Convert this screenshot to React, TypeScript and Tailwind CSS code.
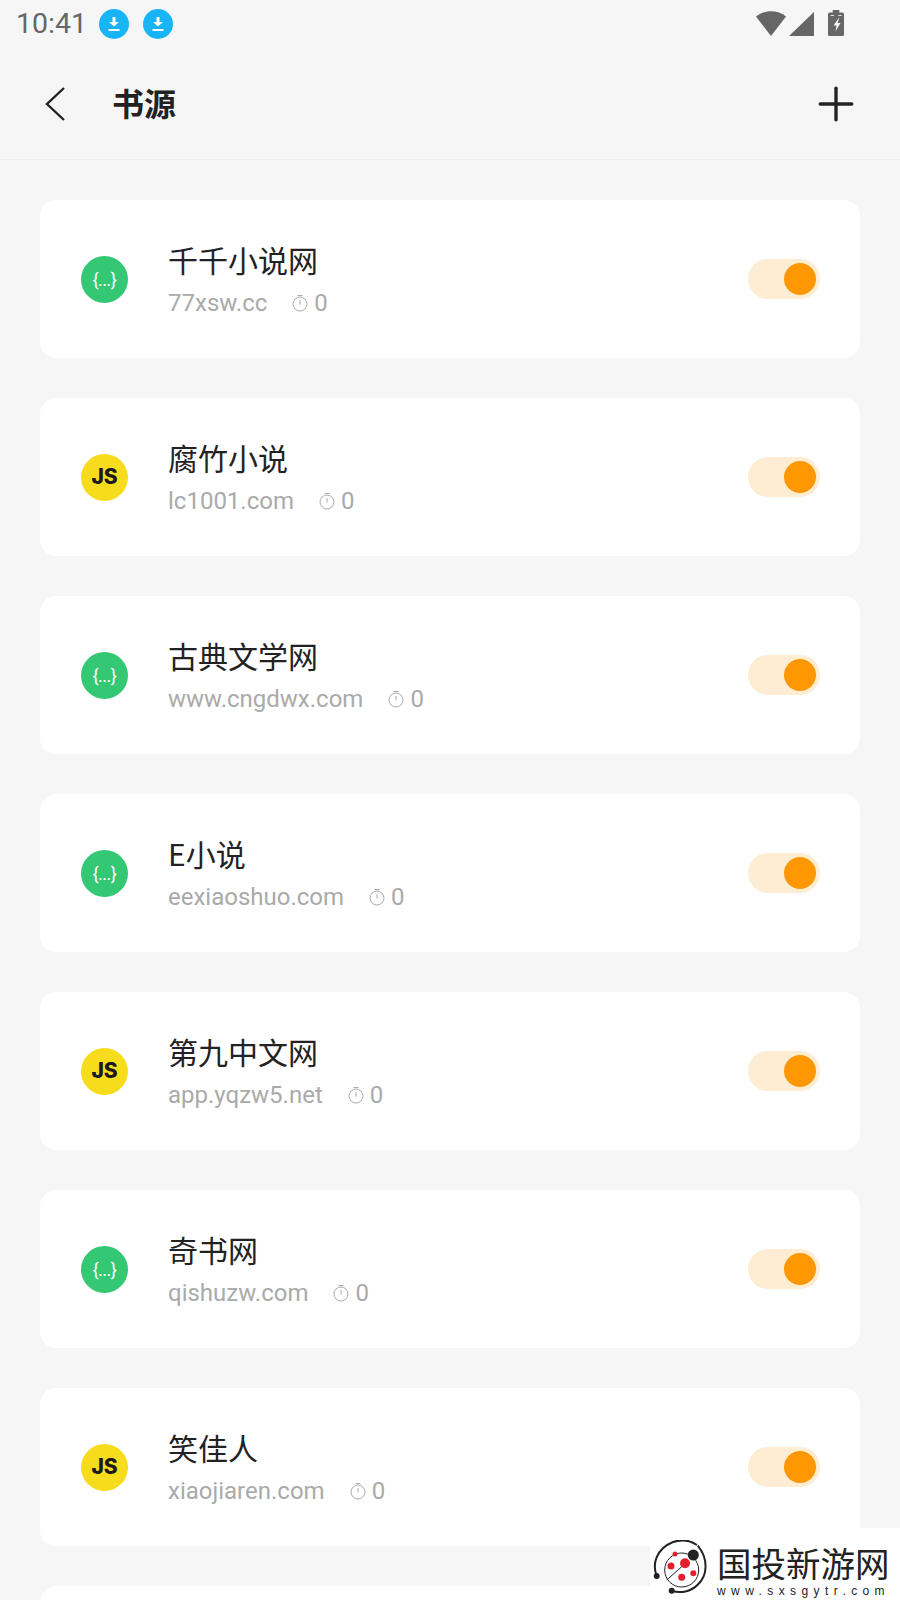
import { Plus } from 'lucide-react'

type Source = { name: string; host: string; kind: 'json' | 'js' }

const sources: Source[] = [
  { name: '千千小说网', host: '77xsw.cc', kind: 'json' },
  { name: '腐竹小说', host: 'lc1001.com', kind: 'js' },
  { name: '古典文学网', host: 'www.cngdwx.com', kind: 'json' },
  { name: 'E小说', host: 'eexiaoshuo.com', kind: 'json' },
  { name: '第九中文网', host: 'app.yqzw5.net', kind: 'js' },
  { name: '奇书网', host: 'qishuzw.com', kind: 'json' },
  { name: '笑佳人', host: 'xiaojiaren.com', kind: 'js' },
]

const DownloadBadge = () => (
  <div className="w-[30px] h-[30px] rounded-full bg-[#17b5f5] flex items-center justify-center">
    <svg width="14" height="16" viewBox="0 0 14 16" fill="#fff">
      <path d="M5.500 1h3v5H12L7 10.500 2 6h3.500z" />
      <path d="M1.500 13h11v2h-11z" />
    </svg>
  </div>
)

const Timer = () => (
  <svg width="16" height="18" viewBox="0 0 16 18" fill="none" stroke="#aaa" strokeWidth="1">
    <circle cx="8" cy="10" r="7" />
    <path d="M5.500 1.500h5M8 6v4.500" />
  </svg>
)

const Row = ({ item }: { item: Source }) => (
  <div className="h-[158px] shrink-0 bg-white rounded-[16px] flex items-center pl-[41px] pr-[40px]">
    {item.kind === 'json' ? (
      <div className="w-[47px] h-[47px] rounded-full bg-[#34c774] flex items-center justify-center text-white text-[18px] font-['Roboto',sans-serif] tracking-[-0.5px]">
        {'{...}'}
      </div>
    ) : (
      <div className="w-[47px] h-[47px] rounded-full bg-[#f7dc1e] flex items-center justify-center text-[#1a1a1a] text-[21px] font-extrabold font-['Inter',sans-serif]">
        JS
      </div>
    )}
    <div className="ml-[40px] flex-1">
      <div className="text-[30px] leading-[42px] text-[#222] font-['Noto_Sans_CJK_SC',sans-serif]">{item.name}</div>
      <div className="mt-[5px] flex items-center text-[24px] leading-[36px] text-[#aaa] font-['Roboto',sans-serif]">
        <span>{item.host}</span>
        <span className="ml-[25px] mr-[6px]"><Timer /></span>
        <span>0</span>
      </div>
    </div>
    <div className="w-[72px] h-[40px] rounded-full bg-[#feecd3] flex items-center justify-end pr-[4px]">
      <div className="w-[32px] h-[32px] rounded-full bg-[#ff9800]" />
    </div>
  </div>
)

export default function App() {
  return (
    <div className="relative w-[900px] h-[1600px] overflow-hidden bg-[#f6f6f6]">
      <div className="h-[48px] flex items-center pl-[16px] pr-[56px] text-[#666]">
        <span className="text-[28.5px] font-['Roboto',sans-serif]">10:41</span>
        <div className="flex items-center gap-[14px] ml-[12px]">
          <DownloadBadge />
          <DownloadBadge />
        </div>
        <svg className="ml-auto" width="88" height="30" viewBox="0 0 88 30" fill="#666">
          <path d="M0 7.500C8 .5 22 .5 30 7.500L15 27z" />
          <path d="M33 27L58 3v24z" />
          <path d="M72 5a1.500 1.500 0 0 1 1.500-1.500h3.200V1h6.600v2.500h3.200A1.500 1.500 0 0 1 88 5v20.500a1.500 1.500 0 0 1-1.500 1.500h-13a1.500 1.500 0 0 1-1.500-1.500z" />
          <path d="M83.500 8l-6 8.500h3l-1 6 5-8.500h-3z" fill="#f6f6f6" />
          <path d="M74.600 6h3.400v1h-3.400zM82.300 6h3.400v1h-3.400z" fill="#ddd" />
        </svg>
      </div>
      <div className="h-[112px] flex items-center border-b border-[#ececec] pl-[45px] pr-[37px]">
        <svg width="20" height="34" viewBox="0 0 20 34" fill="none" stroke="#222" strokeWidth="2.400">
          <path d="M19 1L2 17l17 16" />
        </svg>
        <span className="ml-[47px] -mt-[4px] text-[32px] font-bold text-[#222] font-['Noto_Sans_CJK_SC',sans-serif]">书源</span>
        <Plus size={54} strokeWidth={1.500} className="ml-auto text-[#222]" />
      </div>
      <div className="flex flex-col gap-[40px] pt-[40px] px-[40px]">
        {sources.map((item) => (
          <Row key={item.host} item={item} />
        ))}
        <div className="h-[158px] shrink-0 bg-white rounded-[16px]" />
      </div>

      <div className="absolute right-0 bottom-0 w-[250px] h-[72px] bg-white flex items-start pl-[3px] pt-[12px]">
        <svg width="56" height="56" viewBox="0 0 56 56" fill="none" className="shrink-0">
          <path d="M3.700 36C-1 24 3 9 20 2c9-3 18-1 24 3" stroke="#222" strokeWidth="2" />
          <path d="M18.700 50.700c9 3 19 1 26-6 10-9 11-26 0-39" stroke="#222" strokeWidth="2" />
          <circle cx="28.700" cy="30" r="17" fill="#fff" stroke="#222" strokeWidth="1" />
          <path d="M34 22L13.700 40" stroke="#222" strokeWidth="1" />
          <circle cx="32" cy="23.300" r="5" fill="#e2202c" />
          <circle cx="18" cy="26" r="3.500" fill="#e2202c" />
          <circle cx="28.700" cy="37.300" r="3.500" fill="#e2202c" />
          <circle cx="40.300" cy="33.300" r="3" fill="#e2202c" />
          <circle cx="22" cy="14" r="2.500" fill="#e2202c" />
          <circle cx="40.300" cy="15" r="5.500" fill="#222" />
          <circle cx="3.700" cy="36" r="3" fill="#222" />
          <circle cx="18.700" cy="50.700" r="3" fill="#222" />
        </svg>
        <div className="ml-[8px] text-[#222]">
          <div className="text-[34.5px] leading-[44px] font-['Noto_Sans_CJK_SC',sans-serif] whitespace-nowrap">国投新游网</div>
          <div className="text-[12px] leading-[14px] tracking-[5.400px] font-['Liberation_Sans',sans-serif] whitespace-nowrap">www.sxsgytr.com</div>
        </div>
      </div>
    </div>
  )
}
